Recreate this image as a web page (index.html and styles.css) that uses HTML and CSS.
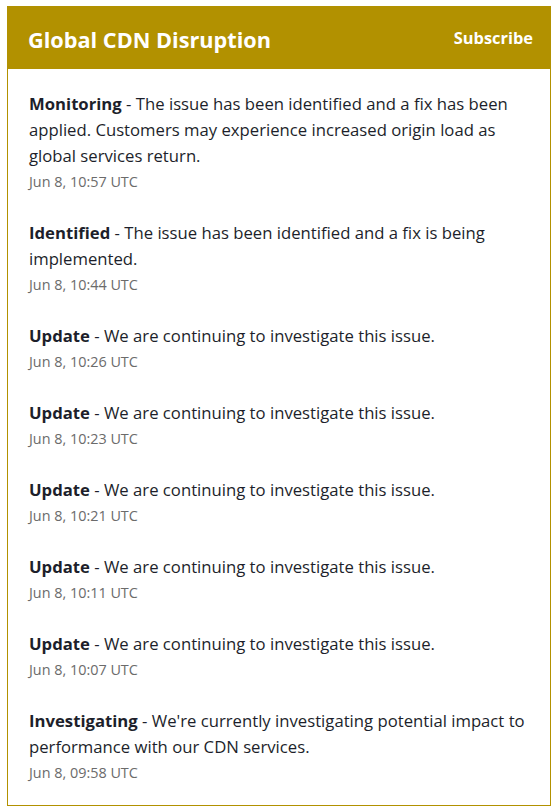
FILE: index.html
```html
<!DOCTYPE html>
<html lang="en">
<head>
<meta charset="utf-8">
<title>Global CDN Disruption</title>
<link rel="stylesheet" href="styles.css">
</head>
<body>
<div class="card">
  <div class="card-header">
    <h1 class="title">Global CDN Disruption</h1>
    <a class="subscribe" href="#">Subscribe</a>
  </div>
  <div class="card-body">
    <div class="update">
      <div class="msg"><strong>Monitoring</strong> - The issue has been identified and a fix has been applied. Customers may experience increased origin load as global services return.</div>
      <div class="time">Jun 8, 10:57 UTC</div>
    </div>
    <div class="update">
      <div class="msg"><strong>Identified</strong> - The issue has been identified and a fix is being implemented.</div>
      <div class="time">Jun 8, 10:44 UTC</div>
    </div>
    <div class="update">
      <div class="msg"><strong>Update</strong> - We are continuing to investigate this issue.</div>
      <div class="time">Jun 8, 10:26 UTC</div>
    </div>
    <div class="update">
      <div class="msg"><strong>Update</strong> - We are continuing to investigate this issue.</div>
      <div class="time">Jun 8, 10:23 UTC</div>
    </div>
    <div class="update">
      <div class="msg"><strong>Update</strong> - We are continuing to investigate this issue.</div>
      <div class="time">Jun 8, 10:21 UTC</div>
    </div>
    <div class="update">
      <div class="msg"><strong>Update</strong> - We are continuing to investigate this issue.</div>
      <div class="time">Jun 8, 10:11 UTC</div>
    </div>
    <div class="update">
      <div class="msg"><strong>Update</strong> - We are continuing to investigate this issue.</div>
      <div class="time">Jun 8, 10:07 UTC</div>
    </div>
    <div class="update">
      <div class="msg"><strong>Investigating</strong> - We're currently investigating potential impact to performance with our CDN services.</div>
      <div class="time">Jun 8, 09:58 UTC</div>
    </div>
  </div>
</div>
</body>
</html>
```

FILE: styles.css
```css
html, body {
  margin: 0;
  padding: 0;
  background: #ffffff;
}

body {
  padding: 6px 6px 0 7px;
  font-family: "Open Sans", "Noto Sans", sans-serif;
  color: #1d1f2b;
}

.card {
  width: 544px;
  box-sizing: border-box;
  border: 1px solid #b29100;
  background: #ffffff;
}

.card-header {
  height: 62px;
  box-sizing: border-box;
  background: #b29100;
  display: flex;
  justify-content: space-between;
  align-items: flex-start;
  padding: 0 17px 0 20px;
}

.title {
  margin: 0;
  padding-top: 19px;
  font-size: 21.7px;
  line-height: 28px;
  font-weight: 700;
  color: #ffffff;
}

.subscribe {
  padding-top: 19px;
  font-size: 16.4px;
  line-height: 24px;
  font-weight: 700;
  color: #ffffff;
  text-decoration: none;
}

.card-body {
  padding: 22px 20px 21px 21px;
  display: flex;
  flex-direction: column;
  gap: 27px;
}

.msg {
  font-size: 16.7px;
  line-height: 26px;
}

.msg strong {
  font-weight: 700;
}

.time {
  margin-top: 2px;
  font-size: 14.4px;
  line-height: 22px;
  color: #6b6b6b;
}
```
